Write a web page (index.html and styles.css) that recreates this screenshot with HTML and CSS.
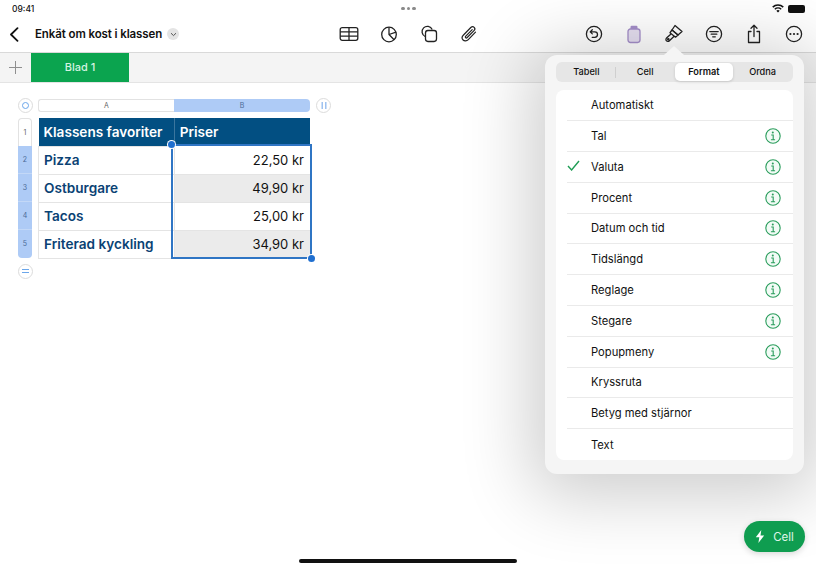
FILE: index.html
```html
<!DOCTYPE html>
<html lang="sv">
<head>
    <meta charset="UTF-8">
    <meta name="viewport" content="width=device-width, initial-scale=1.0">
    <title>Enkät om kost i klassen</title>
    <link rel="stylesheet" href="styles.css">
</head>
<body>
    <div class="app">
        <div class="status-bar">
            <span class="clock">09:41</span>
            <span class="dots"><i></i><i></i><i></i></span>
            <span class="status-icons">
                <svg width="12" height="9" viewBox="0 0 12 9"><path d="M6 8.6 4.3 6.8a2.5 2.5 0 0 1 3.4 0zM3.3 5.8 2.3 4.7a5.4 5.4 0 0 1 7.4 0l-1 1.1a4 4 0 0 0-5.4 0zM1.3 3.7.2 2.6a8.4 8.4 0 0 1 11.6 0l-1.1 1.1a6.9 6.9 0 0 0-9.4 0z" fill="#111"/></svg>
                <span class="battery"></span>
            </span>
        </div>

        <div class="toolbar">
            <div class="doc-title">
                <svg class="back" width="10" height="15" viewBox="0 0 10 15"><path d="M8.5 1.2 2 7.5l6.5 6.3" fill="none" stroke="#111" stroke-width="1.8" stroke-linecap="round" stroke-linejoin="round"/></svg>
                <span class="title-text">Enkät om kost i klassen</span>
                <span class="title-menu"><svg width="7" height="5" viewBox="0 0 7 5"><path d="M1 1.2 3.5 3.6 6 1.2" fill="none" stroke="#555" stroke-width="1"/></svg></span>
            </div>
            <div class="tools tools-mid">
                <svg width="20" height="20" viewBox="0 0 20 20"><g fill="none" stroke="#222" stroke-width="1.3"><rect x="1.2" y="3.7" width="17.600" height="12.600" rx="2"/><path d="M1.2 7.900h17.600M1.2 12.100h17.600M10 3.700v12.600"/></g></svg>
                <svg width="20" height="20" viewBox="0 0 20 20"><g fill="none" stroke="#222" stroke-width="1.3" stroke-linejoin="round"><circle cx="10" cy="10.500" r="7.300"/><path d="M10 3.200v7.300l5.100 5.200M10 10.500l7-2.300"/></g></svg>
                <svg width="20" height="20" viewBox="0 0 20 20"><g fill="none" stroke="#222" stroke-width="1.3"><path d="M6.200 12.500a5.300 5.300 0 1 1 7-7"/><rect x="6.500" y="6.500" width="11" height="11" rx="2.400"/></g></svg>
                <svg width="20" height="20" viewBox="0 0 20 20"><path d="M16.500 8.200 9.300 15.600c-1.600 1.600-3.900 1.700-5.200.4-1.300-1.300-1.100-3.500.4-5L11.800 3.500c1-1 2.500-1.100 3.400-.2.900.9.800 2.300-.2 3.300L8.200 13.500c-.5.500-1.200.6-1.600.2-.4-.4-.3-1.100.2-1.600l6.400-6.500" fill="none" stroke="#222" stroke-width="1.200" stroke-linecap="round"/></svg>
            </div>
            <div class="tools tools-right">
                <svg width="20" height="20" viewBox="0 0 20 20"><g fill="none" stroke="#222" stroke-width="1.3"><circle cx="10" cy="10" r="7.600"/><path d="M8.300 5.800 6.200 7.900l2.100 2M6.500 7.900h4.300a2.700 2.700 0 0 1 0 5.400H8.200" stroke-linecap="round" stroke-linejoin="round"/></g></svg>
                <svg width="20" height="20" viewBox="0 0 20 20"><path d="M6.500 5V3a1.200 1.200 0 0 1 1.200-1.200h4.600A1.200 1.200 0 0 1 13.500 3v2z" fill="#a58fca"/><rect x="4" y="5" width="12" height="13.500" rx="2.400" fill="#e6dff1" stroke="#a58fca" stroke-width="1.300"/></svg>
                <svg width="20" height="20" viewBox="0 0 20 20"><g fill="none" stroke="#222" stroke-width="1.300" stroke-linejoin="round"><path d="M11 1.500 18 7.500 14 11 8 6z"/><path d="M8 6 14 11 11.500 13.200 6 8.700z"/><path d="M7 10 2.800 13.800c-1.100 1-1.100 2.300-.3 3.100.8.800 2 .7 2.900-.2l5-4.600"/><circle cx="4.300" cy="15.300" r=".7"/></g></svg>
                <svg width="20" height="20" viewBox="0 0 20 20"><g fill="none" stroke="#222" stroke-width="1.300" stroke-linecap="round"><circle cx="10" cy="10" r="7.600"/><path d="M5.800 7.600h8.400M7.200 10.200h5.600M8.700 12.800h2.600"/></g></svg>
                <svg width="20" height="20" viewBox="0 0 20 20"><g fill="none" stroke="#222" stroke-width="1.300" stroke-linecap="round" stroke-linejoin="round"><path d="M7 7.500H4.500v11h11v-11H13M10 12.500V1.500M7 4.300l3-3 3 3"/></g></svg>
                <svg width="20" height="20" viewBox="0 0 20 20"><circle cx="10" cy="10" r="7.600" fill="none" stroke="#222" stroke-width="1.300"/><circle cx="6.400" cy="10" r="1.100" fill="#222"/><circle cx="10" cy="10" r="1.100" fill="#222"/><circle cx="13.600" cy="10" r="1.100" fill="#222"/></svg>
            </div>
        </div>

        <div class="tab-bar">
            <span class="add-sheet"><svg width="13" height="13" viewBox="0 0 13 13"><path d="M6.500 0v13M0 6.500h13" stroke="#8f8f8f" stroke-width="1"/></svg></span>
            <span class="sheet-tab">Blad 1</span>
        </div>

        <div class="canvas">
            <div class="sheet">
                <div class="handle corner"><i></i></div>
                <div class="col-heads">
                    <span class="col-head">A</span>
                    <span class="col-head picked">B</span>
                </div>
                <div class="handle col-add">
                    <svg width="6" height="7" viewBox="0 0 6 7"><path d="M1.200 0v7M4.800 0v7" stroke="#8fb8ee" stroke-width="1.300"/></svg>
                </div>

                <div class="row-heads">
                    <span class="row-head first">1</span>
                    <span class="row-head">2</span>
                    <span class="row-head">3</span>
                    <span class="row-head">4</span>
                    <span class="row-head last">5</span>
                </div>

                <div class="table-wrap">
                    <table class="data-table">
                        <tr class="head-row"><th>Klassens favoriter</th><th>Priser</th></tr>
                        <tr><td class="name">Pizza</td><td class="price">22,50 kr</td></tr>
                        <tr><td class="name">Ostburgare</td><td class="price alt">49,90 kr</td></tr>
                        <tr><td class="name">Tacos</td><td class="price">25,00 kr</td></tr>
                        <tr><td class="name">Friterad kyckling</td><td class="price alt">34,90 kr</td></tr>
                    </table>
                    <div class="selection"><i class="knob top"></i><i class="knob bottom"></i></div>
                </div>

                <div class="handle row-add"><span class="eq"></span></div>
            </div>
        </div>

        <div class="popover">
            <span class="arrow"></span>
            <div class="segments">
                <span class="segment">Tabell</span>
                <span class="seg-line"></span>
                <span class="segment">Cell</span>
                <span class="segment active">Format</span>
                <span class="segment">Ordna</span>
            </div>
            <ul class="format-list" id="format-list"></ul>
        </div>

        <div class="cell-button">
            <svg width="10" height="13" viewBox="0 0 10 13"><path d="M6.300 0 .8 7.300h3.500L3.400 13l5.800-7.500H5.500z" fill="#fff"/></svg>
            <span>Cell</span>
        </div>

        <div class="home-bar"></div>
    </div>

    <script>
        // Format rows: name, checked, has info button
        const formats = [
            ['Automatiskt', false, false],
            ['Tal', false, true],
            ['Valuta', true, true],
            ['Procent', false, true],
            ['Datum och tid', false, true],
            ['Tidslängd', false, true],
            ['Reglage', false, true],
            ['Stegare', false, true],
            ['Popupmeny', false, true],
            ['Kryssruta', false, false],
            ['Betyg med stjärnor', false, false],
            ['Text', false, false]
        ];

        const check = '<svg class="check" width="13" height="11" viewBox="0 0 13 11"><path d="M1 6l3.600 4L12 1" fill="none" stroke="#1f9d55" stroke-width="1.400"/></svg>';
        const info = '<svg class="info" width="16" height="16" viewBox="0 0 16 16"><circle cx="8" cy="8" r="7.200" fill="#f2fbf6" stroke="#2a9d5c" stroke-width="1.100"/><circle cx="7.800" cy="4.500" r="1" fill="#2a9d5c"/><path d="M6.200 7h2v4.600M5.900 11.700h4.200" fill="none" stroke="#2a9d5c" stroke-width="1.100"/></svg>';

        document.getElementById('format-list').innerHTML = formats.map(f => `
            <li class="format-row">
                <span class="check-slot">${f[1] ? check : ''}</span>
                <span class="format-name">${f[0]}</span>
                ${f[2] ? info : ''}
            </li>
        `).join('');
    </script>
</body>
</html>
```

FILE: styles.css
```css
* {
    box-sizing: border-box;
}
html, body {
    margin: 0;
    height: 100%;
}
body {
    font-family: Inter, "Liberation Sans", sans-serif;
    background: #fff;
    color: #111;
    overflow: hidden;
}
.app {
    position: relative;
    width: 816px;
    height: 567px;
    overflow: hidden;
    background: #fff;
}

/* status bar */
.status-bar {
    height: 17px;
    padding: 0 11px 0 12px;
    display: grid;
    grid-template-columns: 1fr auto 1fr;
    align-items: center;
}
.clock {
    font-size: 8.500px;
    font-weight: 500;
}
.dots {
    display: flex;
    gap: 2px;
}
.dots i {
    width: 3.500px;
    height: 3.500px;
    border-radius: 50%;
    background: #8a8a8a;
}
.status-icons {
    display: flex;
    justify-content: flex-end;
    align-items: center;
    gap: 4px;
}
.battery {
    width: 17px;
    height: 8px;
    border-radius: 2px;
    background: #111;
}

/* toolbar */
.toolbar {
    height: 35px;
    padding: 0 12px 1px 9px;
    display: flex;
    align-items: center;
    background: #fff;
}
.doc-title {
    width: 330px;
    display: flex;
    align-items: center;
}
.back {
    margin-right: 16px;
}
.title-text {
    font-size: 11.500px;
    font-weight: 600;
    letter-spacing: -0.1px;
}
.title-menu {
    width: 12px;
    height: 12px;
    margin-left: 5px;
    border-radius: 50%;
    background: #e4e4e4;
    display: flex;
    align-items: center;
    justify-content: center;
}
.tools {
    display: flex;
    align-items: center;
}
.tools-mid {
    gap: 20px;
}
.tools-right {
    margin-left: auto;
    gap: 20px;
}

/* sheet tabs */
.tab-bar {
    height: 31px;
    display: flex;
    background: #f4f4f4;
    border-top: 1px solid #d9d9d9;
    border-bottom: 1px solid #e4e4e4;
}
.add-sheet {
    width: 31px;
    display: flex;
    align-items: center;
    justify-content: center;
}
.sheet-tab {
    width: 98px;
    background: #0ba44f;
    color: #d5f3e1;
    font-size: 11px;
    font-weight: 500;
    line-height: 29px;
    text-align: center;
}

/* spreadsheet */
.canvas {
    padding: 15px 0 0 18px;
}
.sheet {
    display: grid;
    grid-template-columns: 14px 272px 30px;
    grid-template-rows: 14px auto auto;
    column-gap: 6px;
    row-gap: 6px;
    width: max-content;
}
.handle {
    width: 15px;
    height: 15px;
    border-radius: 50%;
    background: #fff;
    border: 1px solid #dcdcdc;
    display: flex;
    align-items: center;
    justify-content: center;
}
.corner i {
    width: 7px;
    height: 7px;
    border-radius: 50%;
    border: 1.500px solid #6ba6ea;
}
.col-heads {
    display: flex;
    height: 13px;
    margin-top: 1px;
}
.col-head {
    width: 136px;
    border: 1px solid #e2e2e2;
    border-right: none;
    border-radius: 3px 0 0 3px;
    font-size: 7px;
    line-height: 11px;
    text-align: center;
    color: #666;
    background: #fff;
}
.col-head.picked {
    border: none;
    border-radius: 0 4px 4px 0;
    background: #aecbf6;
    line-height: 13px;
    color: #4b6a96;
}
.row-heads {
    display: flex;
    flex-direction: column;
}
.row-head {
    height: 28px;
    font-size: 7px;
    line-height: 28px;
    text-align: center;
    background: #aecbf6;
    color: #4b6a96;
    border-bottom: 1px solid #c3d8f7;
}
.row-head.first {
    background: #fff;
    color: #666;
    border: 1px solid #e2e2e2;
    border-bottom: none;
    border-radius: 4px 4px 0 0;
}
.row-head.last {
    border-bottom: none;
    border-radius: 0 0 4px 4px;
}
.table-wrap {
    position: relative;
    width: 272px;
}
.data-table {
    width: 272px;
    border-collapse: collapse;
    table-layout: fixed;
}
.data-table th,
.data-table td {
    height: 28px;
    padding: 0 6px 0 5px;
    font-size: 13px;
    white-space: nowrap;
}
.data-table th {
    background: #024f82;
    color: #fff;
    font-size: 13.600px;
    font-weight: 600;
    text-align: left;
    border-right: 1px solid #3b769e;
}
.data-table th:last-child {
    border-right: none;
}
.data-table .name {
    color: #0a4274;
    font-size: 13.600px;
    font-weight: 600;
    border: 1px solid #e4e4e4;
}
.price {
    text-align: right;
    font-weight: 400;
    color: #111;
    border-bottom: 1px solid #e4e4e4;
}
.price.alt {
    background: #ebebeb;
}
.selection {
    position: absolute;
    left: 133px;
    top: 26px;
    width: 141px;
    height: 115px;
    border: 2px solid #2f75c4;
    pointer-events: none;
}
.knob {
    position: absolute;
    width: 7px;
    height: 7px;
    border-radius: 50%;
    background: #1f6fd0;
    box-shadow: 0 0 0 1px #fff;
}
.knob.top {
    left: -5px;
    top: -5px;
}
.knob.bottom {
    right: -5px;
    bottom: -5px;
}
.row-add {
    grid-column: 1;
    margin-top: -1px;
}
.eq {
    width: 7px;
    height: 4px;
    border-top: 1px solid #6ba6ea;
    border-bottom: 1px solid #6ba6ea;
}

/* format popover */
.popover {
    position: absolute;
    left: 545px;
    top: 55px;
    width: 259px;
    height: 419px;
    padding: 7px 11px 0;
    border-radius: 12px;
    background: #f5f5f5;
    box-shadow: 0 8px 70px 14px rgba(0, 0, 0, 0.2);
}
.arrow {
    position: absolute;
    left: 119px;
    top: -9px;
    width: 0;
    height: 0;
    border-left: 10px solid transparent;
    border-right: 10px solid transparent;
    border-bottom: 9px solid #f5f5f5;
}
.segments {
    height: 20px;
    padding: 1px;
    display: flex;
    align-items: center;
    border-radius: 6px;
    background: #e6e6e6;
    font-size: 9.200px;
    font-weight: 500;
}
.segment {
    width: 59px;
    line-height: 18px;
    text-align: center;
}
.segment.active {
    background: #fff;
    border-radius: 5px;
    box-shadow: 0 1px 3px rgba(0, 0, 0, 0.15);
    font-weight: 600;
}
.seg-line {
    width: 1px;
    height: 11px;
    margin-left: -1px;
    background: #cfcfcf;
}
.format-list {
    list-style: none;
    margin: 8px 0 0;
    padding: 0.400px 0 0 11px;
    background: #fff;
    border-radius: 8px;
}
.format-row {
    height: 30.800px;
    display: flex;
    align-items: center;
    padding-right: 12px;
    border-bottom: 1px solid #eaeaea;
    font-size: 11.200px;
}
.format-row:last-child {
    border-bottom: none;
}
.check-slot {
    width: 24px;
}
.format-name {
    flex: 1;
}

/* floating cell button */
.cell-button {
    position: absolute;
    left: 744px;
    top: 521px;
    width: 61px;
    height: 31px;
    border-radius: 16px;
    background: #0f9d50;
    color: #dff5e8;
    font-size: 11.500px;
    display: flex;
    align-items: center;
    justify-content: center;
    gap: 8px;
    box-shadow: 0 2px 6px rgba(0, 0, 0, 0.15);
}
.home-bar {
    position: absolute;
    left: 299px;
    top: 559px;
    width: 218px;
    height: 4px;
    border-radius: 2px;
    background: #111;
}
```
